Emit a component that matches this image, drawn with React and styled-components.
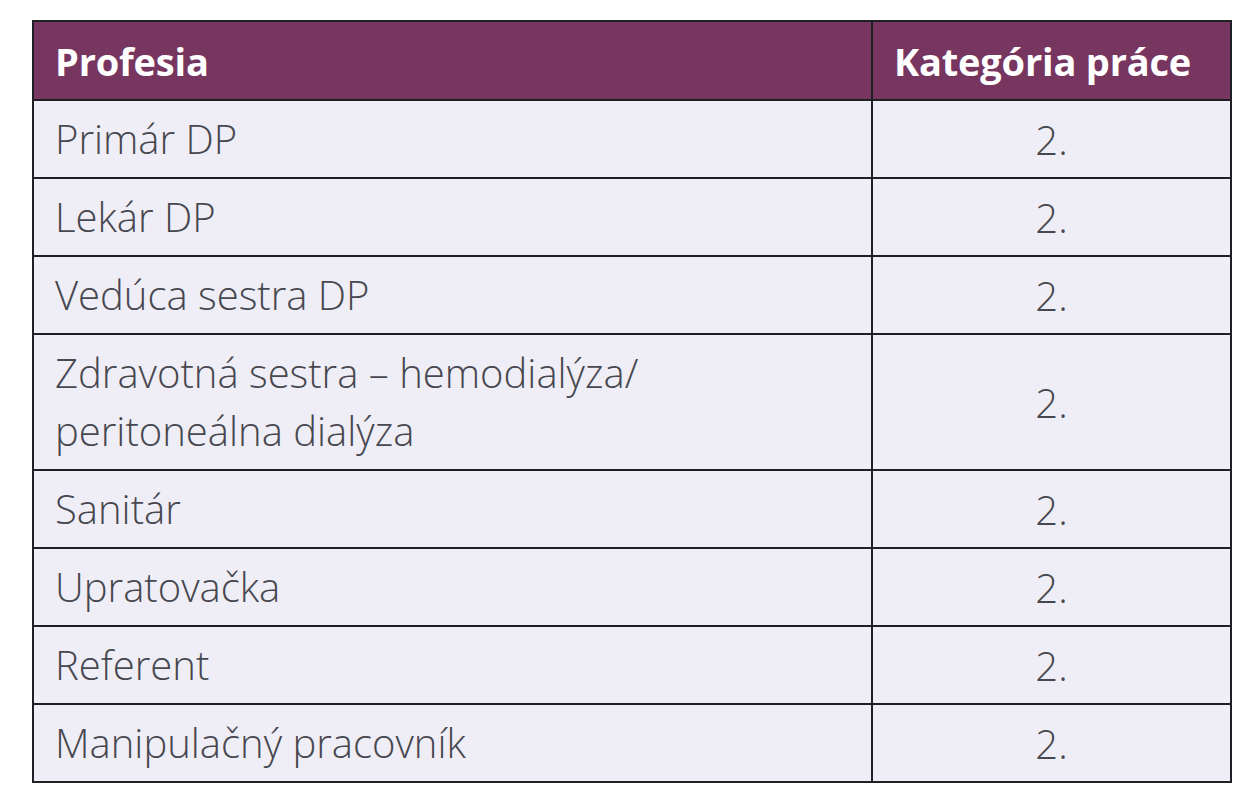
import React from "react";
import styled, { createGlobalStyle } from "styled-components";

const Global = createGlobalStyle`
  html, body { margin: 0; padding: 0; background: #ffffff; }
  body { font-family: "Open Sans", "Liberation Sans", sans-serif; }
`;

const Page = styled.div`
  padding: 20px 0 0 32px;
`;

const Table = styled.table`
  border-collapse: collapse;
  width: 1198px;
  table-layout: fixed;
  border: 2px solid #1f1f24;
`;

const HeadCell = styled.th`
  background: #77365f;
  color: #ffffff;
  font-weight: 700;
  font-size: 38px;
  text-align: left;
  padding: 0 0 0 21px;
  height: 77px;
  border: 2px solid #1f1f24;
  letter-spacing: -0.2px;
  white-space: nowrap;
`;

const Row = styled.tr`
  background: #efeef6;
  height: ${(p) => (p.$tall ? "136px" : "78px")};
`;

const NameCell = styled.td`
  color: #47474f;
  font-weight: 300;
  font-size: 40px;
  line-height: 58px;
  padding: 0 0 0 21px;
  border: 2px solid #1f1f24;
  white-space: nowrap;
`;

const CatCell = styled.td`
  color: #47474f;
  font-weight: 300;
  font-size: 40px;
  text-align: center;
  border: 2px solid #1f1f24;
`;

const rows = [
  ["Primár DP"],
  ["Lekár DP"],
  ["Vedúca sestra DP"],
  ["Zdravotná sestra – hemodialýza/", "peritoneálna dialýza"],
  ["Sanitár"],
  ["Upratovačka"],
  ["Referent"],
  ["Manipulačný pracovník"],
];

export default function App() {
  return (
    <Page>
      <Global />
      <Table>
        <colgroup>
          <col style={{ width: "839px" }} />
          <col style={{ width: "359px" }} />
        </colgroup>
        <thead>
          <tr>
            <HeadCell>Profesia</HeadCell>
            <HeadCell>Kategória práce</HeadCell>
          </tr>
        </thead>
        <tbody>
          {rows.map((r, i) => (
            <Row key={i} $tall={r.length > 1}>
              <NameCell>
                {r.map((line, j) => (
                  <React.Fragment key={j}>
                    {j > 0 && <br />}
                    {line}
                  </React.Fragment>
                ))}
              </NameCell>
              <CatCell>2.</CatCell>
            </Row>
          ))}
        </tbody>
      </Table>
    </Page>
  );
}
